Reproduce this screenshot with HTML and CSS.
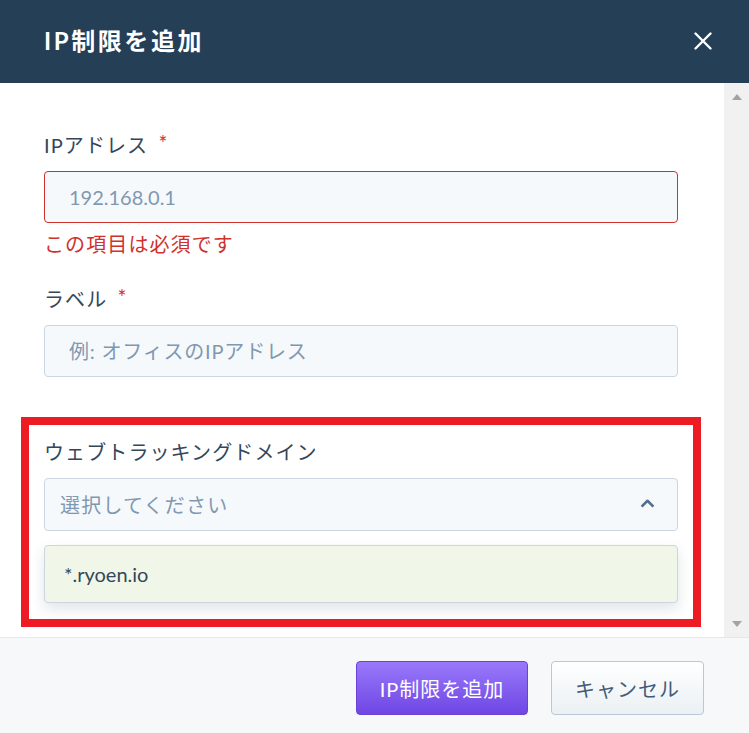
FILE: index.html
```html
<!DOCTYPE html>
<html lang="ja">
<head>
<meta charset="utf-8">
<title>IP制限を追加</title>
<link rel="stylesheet" href="styles.css">
</head>
<body>
<div class="modal">
  <header class="modal-header">
    <h1 class="modal-title">IP制限を追加</h1>
    <button class="close-btn" aria-label="閉じる">
      <svg width="18" height="18" viewBox="0 0 18 18"><path d="M1.5 1.5 L16.5 16.5 M16.5 1.5 L1.5 16.5" stroke="#fff" stroke-width="2.4" stroke-linecap="round" fill="none"/></svg>
    </button>
  </header>
  <div class="modal-body">
    <div class="content">
      <div class="field field-error">
        <label class="label">IPアドレス <span class="req">*</span></label>
        <input class="input input-invalid" type="text" placeholder="192.168.0.1">
        <div class="error">この項目は必須です</div>
      </div>
      <div class="field field-gap">
        <label class="label">ラベル <span class="req">*</span></label>
        <input class="input input-ja" type="text" placeholder="例: オフィスのIPアドレス">
      </div>
      <div class="field">
        <label class="label">ウェブトラッキングドメイン</label>
        <div class="select">
          <span class="select-placeholder">選択してください</span>
          <svg class="chevron" width="15" height="9" viewBox="0 0 15 9"><path d="M1.6 7.6 L7.5 1.8 L13.4 7.6" stroke="#516f90" stroke-width="2.6" fill="none" stroke-linejoin="round"/></svg>
        </div>
        <div class="dropdown">
          <div class="option">*.ryoen.io</div>
        </div>
      </div>
      <div class="highlight"></div>
    </div>
    <div class="scrollbar">
      <span class="arrow arrow-up"></span>
      <span class="arrow arrow-down"></span>
    </div>
  </div>
  <footer class="modal-footer">
    <button class="btn btn-primary">IP制限を追加</button>
    <button class="btn btn-secondary">キャンセル</button>
  </footer>
</div>
</body>
</html>
```
FILE: styles.css
```css
* { box-sizing: border-box; }
html, body { margin: 0; padding: 0; }
body {
  font-family: Lato, "Noto Sans CJK JP", sans-serif;
  color: #33475b;
  background: #fff;
}
.modal {
  width: 749px;
  height: 733px;
  display: flex;
  flex-direction: column;
  overflow: hidden;
}
.modal-header {
  height: 83px;
  background: #253f57;
  display: flex;
  align-items: center;
  justify-content: space-between;
  padding: 0 37px 0 44px;
  flex: none;
}
.modal-title {
  margin: 0;
  color: #fff;
  font-size: 24px;
  font-weight: 700;
  letter-spacing: 2.6px;
  line-height: 1;
  padding-bottom: 2px;
}
.close-btn {
  background: none;
  border: 0;
  padding: 0;
  width: 18px;
  height: 18px;
  display: flex;
  margin-bottom: 2px;
}
.modal-body {
  height: 554px;
  display: flex;
  flex: none;
}
.content {
  position: relative;
  width: 724px;
  padding: 47px 46px 0 44px;
  background: #fff;
}
.scrollbar {
  width: 25px;
  background: #f1f1f1;
  display: flex;
  flex-direction: column;
  justify-content: space-between;
  align-items: center;
  padding: 11px 0 10px;
}
.arrow {
  width: 0;
  height: 0;
  border-left: 5.5px solid transparent;
  border-right: 5.5px solid transparent;
}
.arrow-up { border-bottom: 6px solid #a3a3a3; }
.arrow-down { border-top: 6px solid #a3a3a3; }
.field { display: flex; flex-direction: column; }
.field-error { margin-bottom: 25px; }
.field-gap { margin-bottom: 60px; }
.label {
  font-size: 20px;
  line-height: 30px;
  margin-bottom: 11px;
  color: #33475b;
  letter-spacing: 1.1px;
}
.req { color: #d0312d; font-size: 21px; position: relative; top: -2px; margin-left: 4px; }
.input {
  height: 52px;
  width: 100%;
  border: 1px solid #cbd6e2;
  border-radius: 4px;
  background: #f6f9fb;
  padding: 0 24px;
  font-family: Lato, "Noto Sans CJK JP", sans-serif;
  font-size: 20px;
  color: #33475b;
  outline: none;
}
.input-ja { letter-spacing: 0.8px; }
.input::placeholder { color: #7f98b2; }
.input-invalid { border-color: #d0312d; }
.error {
  margin-top: 6px;
  font-size: 20px;
  line-height: 30px;
  color: #d0312d;
  letter-spacing: 1.1px;
}
.select {
  height: 53px;
  border: 1px solid #cbd6e2;
  border-radius: 4px;
  background: #f6f9fb;
  display: flex;
  align-items: center;
  justify-content: space-between;
  padding: 0 22px 0 15px;
}
.select-placeholder { font-size: 20px; color: #7f98b2; letter-spacing: 1.2px; }
.chevron { margin-top: -2px; }
.dropdown {
  margin-top: 14px;
  border: 1px solid #cbd6e2;
  border-radius: 4px;
  background: #f0f7e8;
  box-shadow: 0 6px 14px rgba(45, 62, 80, 0.14);
}
.option {
  height: 56px;
  display: flex;
  align-items: center;
  padding: 0 19px;
  font-size: 20px;
  color: #33475b;
}
.highlight {
  position: absolute;
  left: 21px;
  top: 334px;
  width: 680px;
  height: 210px;
  border: 8px solid #ed1c24;
  pointer-events: none;
}
.modal-footer {
  flex: 1;
  border-top: 1px solid #e3e8ed;
  background: #f6f8fa;
  display: flex;
  justify-content: flex-end;
  align-items: flex-start;
  gap: 23px;
  padding: 23px 45px 0 0;
}
.btn {
  height: 54px;
  border-radius: 4px;
  font-family: Lato, "Noto Sans CJK JP", sans-serif;
  font-size: 20px;
  padding: 0;
  letter-spacing: 1px;
  cursor: pointer;
}
.btn-primary {
  width: 172px;
  color: #fff;
  font-weight: 400;
  background: linear-gradient(#9979fa, #6f46e4);
  border: 1px solid #6a42d6;
}
.btn-secondary {
  width: 153px;
  color: #425b76;
  background: linear-gradient(#ffffff, #eaf0f3);
  border: 1px solid #b9c8d4;
}
```
